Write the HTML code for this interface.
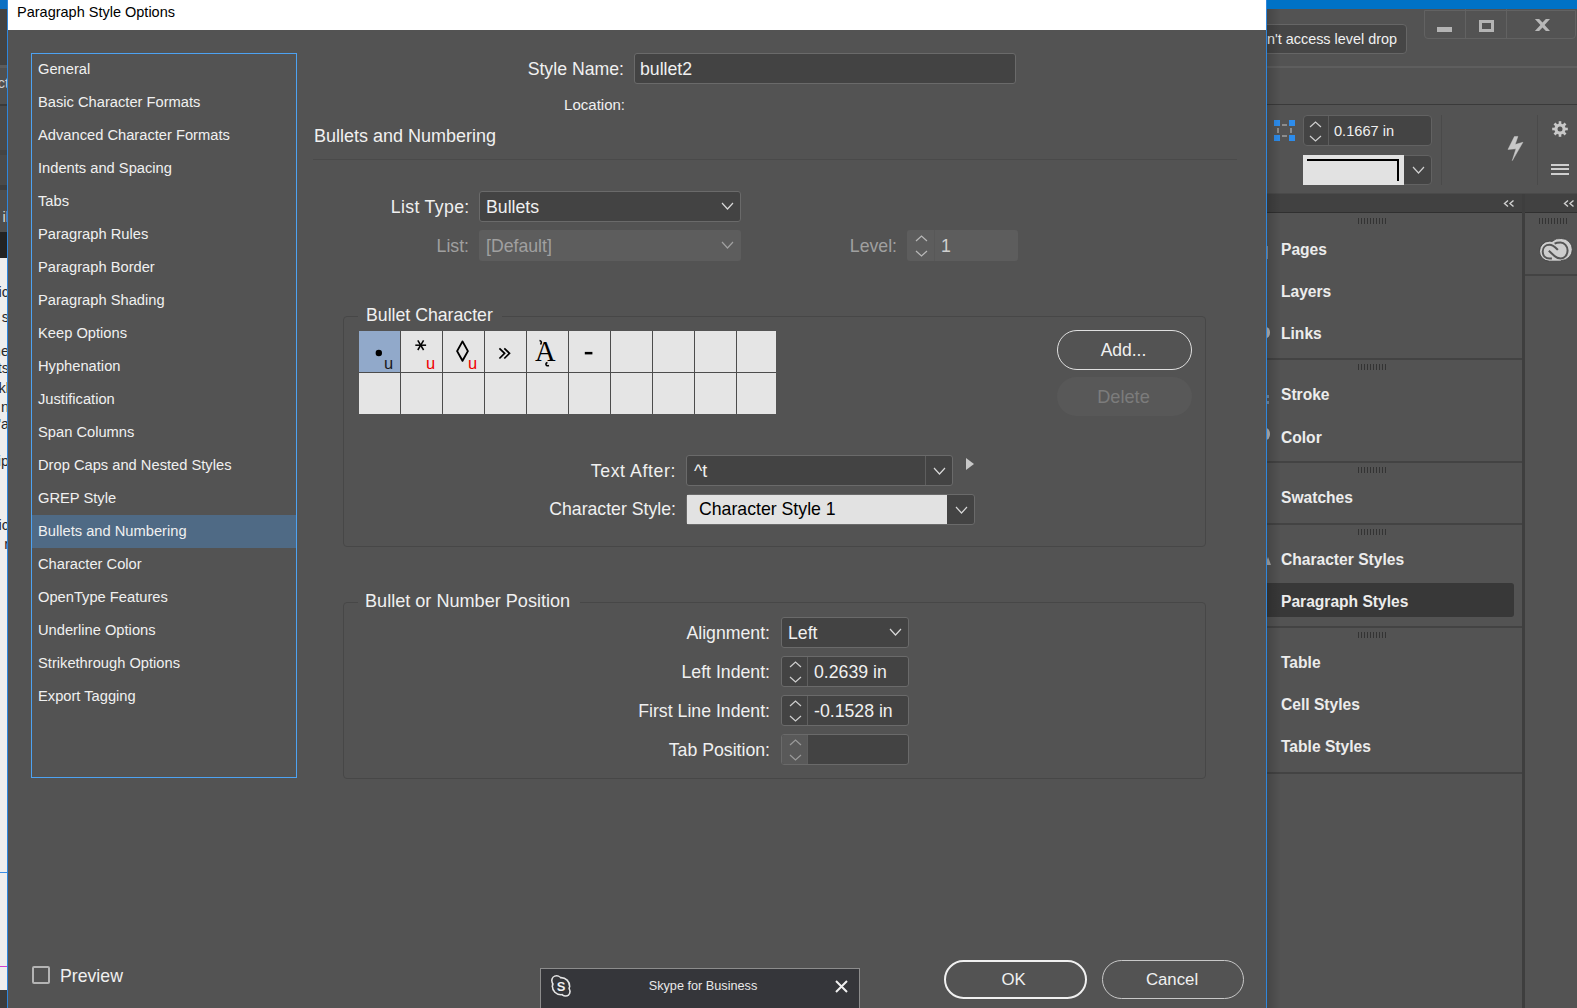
<!DOCTYPE html>
<html><head><meta charset="utf-8">
<style>
*{margin:0;padding:0;box-sizing:border-box}
html,body{width:1577px;height:1008px;overflow:hidden;background:#535353;font-family:"Liberation Sans",sans-serif}
.a{position:absolute}
.t{position:absolute;white-space:nowrap;line-height:1;color:#f0f0f0}
svg.a{overflow:visible}
</style></head><body>

<div class="a" style="left:0px;top:0px;width:7px;height:9px;background:#0c6fc2"></div>
<div class="a" style="left:0px;top:9px;width:7px;height:56px;background:#434343"></div>
<div class="a" style="left:0px;top:65px;width:7px;height:3px;background:#5c5c5c"></div>
<div class="a" style="left:0px;top:68px;width:7px;height:36px;background:#505050"></div>
<div class="a" style="left:0px;top:104px;width:7px;height:2px;background:#3a3a3a"></div>
<div class="a" style="left:0px;top:106px;width:7px;height:44px;background:#4a4a4a"></div>
<div class="a" style="left:0px;top:150px;width:7px;height:5px;background:#444"></div>
<div class="a" style="left:0px;top:155px;width:7px;height:30px;background:#4a4a4a"></div>
<div class="a" style="left:0px;top:185px;width:7px;height:5px;background:#3e3e3e"></div>
<div class="a" style="left:0px;top:190px;width:7px;height:42px;background:#4e4e4e"></div>
<div class="a" style="left:0px;top:232px;width:7px;height:26px;background:#232323"></div>
<div class="a" style="left:0px;top:258px;width:7px;height:732px;background:#eeeeee"></div>
<div class="a" style="left:0px;top:872px;width:7px;height:1px;background:#3a8ee6"></div>
<div class="a" style="left:0px;top:966px;width:7px;height:1px;background:#d040d0"></div>
<div class="a" style="left:0px;top:990px;width:7px;height:18px;background:#3c3c3c"></div>
<div class="a" style="left:1267px;top:0px;width:310px;height:9px;background:#0072c6"></div>
<div class="a" style="left:1267px;top:9px;width:310px;height:96px;background:#535353"></div>
<div class="a" style="left:1250px;top:24px;width:157px;height:30px;background:#464646;border:1px solid #666666;border-radius:4px"></div>
<div class="t" style="left:1267px;top:32px;font-size:14.4px;color:#f0f0f0">n't access level drop</div>
<div class="a" style="left:1424px;top:10px;width:152px;height:29px;border:1px solid #626262;border-radius:0 0 4px 4px"></div>
<div class="a" style="left:1465px;top:9px;width:1px;height:29px;background:#626262"></div>
<div class="a" style="left:1506px;top:9px;width:1px;height:29px;background:#626262"></div>
<div class="a" style="left:1437px;top:27px;width:15px;height:5px;background:#b4b4b4"></div>
<div class="a" style="left:1479px;top:20px;width:15px;height:12px;border:3px solid #b4b4b4"></div>
<svg class="a" style="left:1500px;top:10px" width="60" height="30"><polygon points="34.9,9 39.1,9 42.5,12.6 45.9,9 50,9 44.6,15 50,21 45.9,21 42.5,17.4 39.1,21 34.9,21 40.4,15" fill="#b8b8b8"/></svg>
<div class="a" style="left:1267px;top:66px;width:310px;height:2px;background:#5e5e5e"></div>
<div class="a" style="left:1267px;top:104px;width:310px;height:1px;background:#3a3a3a"></div>
<svg class="a" style="left:1274px;top:120px" width="22" height="22"><rect x="0" y="0" width="6" height="6" fill="#2d8ceb"/><rect x="15" y="0" width="6" height="6" fill="#2d8ceb"/><rect x="0" y="15" width="6" height="6" fill="#2d8ceb"/><rect x="15" y="15" width="6" height="6" fill="#2d8ceb"/><rect x="8" y="4" width="5" height="2" fill="#8c8c8c"/><rect x="8" y="15" width="5" height="2" fill="#8c8c8c"/><rect x="3" y="8" width="2" height="5" fill="#8c8c8c"/><rect x="16" y="8" width="2" height="5" fill="#8c8c8c"/></svg>
<div class="a" style="left:1303px;top:115px;width:129px;height:31px;background:#444;border:1px solid #626262;border-radius:4px"></div>
<div class="a" style="left:1328px;top:116px;width:1px;height:29px;background:#5c5c5c"></div>
<svg class="a" style="left:1308.5px;top:120.5px" width="13" height="7"><polyline points="1,6 6.5,1 12,6" fill="none" stroke="#cfcfcf" stroke-width="1.2"/></svg>
<svg class="a" style="left:1308.5px;top:134.5px" width="13" height="7"><polyline points="1,1 6.5,6 12,1" fill="none" stroke="#cfcfcf" stroke-width="1.2"/></svg>
<div class="t" style="left:1334px;top:124px;font-size:14.6px;">0.1667 in</div>
<div class="a" style="left:1303px;top:155px;width:129px;height:30px;background:#444;border:1px solid #626262;border-radius:4px"></div>
<div class="a" style="left:1303px;top:155px;width:101px;height:30px;background:#e2e2e2"></div>
<div class="a" style="left:1307px;top:159px;width:92px;height:2px;background:#000"></div>
<div class="a" style="left:1397px;top:159px;width:2px;height:22px;background:#000"></div>
<svg class="a" style="left:1411.5px;top:166.0px" width="13" height="8"><polyline points="1,1 6.5,7 12,1" fill="none" stroke="#cfcfcf" stroke-width="1.2"/></svg>
<div class="a" style="left:1441px;top:115px;width:1px;height:70px;background:#4a4a4a"></div>
<div class="a" style="left:1537px;top:115px;width:1px;height:70px;background:#4a4a4a"></div>
<svg class="a" style="left:1506px;top:135px" width="19" height="27"><polygon points="8.4,1.6 11.9,1.4 9.1,9.6 16.9,7.3 6.3,25.6 10,13.75 2,14.4" fill="#c8c8c8" stroke="#c8c8c8" stroke-width="0.5" stroke-linejoin="round"/></svg>
<svg class="a" style="left:1551px;top:120px" width="18" height="18"><g transform="translate(9,9)" fill="#c8c8c8"><circle r="5.6"/><rect x="-1.3" y="-7.8" width="2.6" height="3.5" transform="rotate(0)"/><rect x="-1.3" y="-7.8" width="2.6" height="3.5" transform="rotate(45)"/><rect x="-1.3" y="-7.8" width="2.6" height="3.5" transform="rotate(90)"/><rect x="-1.3" y="-7.8" width="2.6" height="3.5" transform="rotate(135)"/><rect x="-1.3" y="-7.8" width="2.6" height="3.5" transform="rotate(180)"/><rect x="-1.3" y="-7.8" width="2.6" height="3.5" transform="rotate(225)"/><rect x="-1.3" y="-7.8" width="2.6" height="3.5" transform="rotate(270)"/><rect x="-1.3" y="-7.8" width="2.6" height="3.5" transform="rotate(315)"/><circle r="2.5" fill="#535353"/></g></svg>
<div class="a" style="left:1551px;top:164px;width:18px;height:2px;background:#cfcfcf"></div>
<div class="a" style="left:1551px;top:168px;width:18px;height:2px;background:#cfcfcf"></div>
<div class="a" style="left:1551px;top:173px;width:18px;height:2px;background:#cfcfcf"></div>
<div class="a" style="left:1267px;top:193px;width:310px;height:1px;background:#4a4a4a"></div>
<div class="a" style="left:1267px;top:194px;width:310px;height:18px;background:#414141"></div>
<div class="a" style="left:1267px;top:212px;width:310px;height:1px;background:#303030"></div>
<svg class="a" style="left:1503px;top:200px" width="12" height="8"><polyline points="5,0.5 1.5,3.5 5,6.5" fill="none" stroke="#d0d0d0" stroke-width="1.4"/><polyline points="10.5,0.5 7,3.5 10.5,6.5" fill="none" stroke="#d0d0d0" stroke-width="1.4"/></svg>
<svg class="a" style="left:1563px;top:200px" width="12" height="8"><polyline points="5,0.5 1.5,3.5 5,6.5" fill="none" stroke="#d0d0d0" stroke-width="1.4"/><polyline points="10.5,0.5 7,3.5 10.5,6.5" fill="none" stroke="#d0d0d0" stroke-width="1.4"/></svg>
<div class="a" style="left:1522px;top:194px;width:3px;height:814px;background:#3e3e3e"></div>
<svg class="a" style="left:1358px;top:218px" width="30" height="6"><rect x="0" y="0" width="1" height="6" fill="#333"/><rect x="3" y="0" width="1" height="6" fill="#333"/><rect x="6" y="0" width="1" height="6" fill="#333"/><rect x="9" y="0" width="1" height="6" fill="#333"/><rect x="12" y="0" width="1" height="6" fill="#333"/><rect x="15" y="0" width="1" height="6" fill="#333"/><rect x="18" y="0" width="1" height="6" fill="#333"/><rect x="21" y="0" width="1" height="6" fill="#333"/><rect x="24" y="0" width="1" height="6" fill="#333"/><rect x="27" y="0" width="1" height="6" fill="#333"/></svg>
<svg class="a" style="left:1358px;top:364px" width="30" height="6"><rect x="0" y="0" width="1" height="6" fill="#333"/><rect x="3" y="0" width="1" height="6" fill="#333"/><rect x="6" y="0" width="1" height="6" fill="#333"/><rect x="9" y="0" width="1" height="6" fill="#333"/><rect x="12" y="0" width="1" height="6" fill="#333"/><rect x="15" y="0" width="1" height="6" fill="#333"/><rect x="18" y="0" width="1" height="6" fill="#333"/><rect x="21" y="0" width="1" height="6" fill="#333"/><rect x="24" y="0" width="1" height="6" fill="#333"/><rect x="27" y="0" width="1" height="6" fill="#333"/></svg>
<svg class="a" style="left:1358px;top:467px" width="30" height="6"><rect x="0" y="0" width="1" height="6" fill="#333"/><rect x="3" y="0" width="1" height="6" fill="#333"/><rect x="6" y="0" width="1" height="6" fill="#333"/><rect x="9" y="0" width="1" height="6" fill="#333"/><rect x="12" y="0" width="1" height="6" fill="#333"/><rect x="15" y="0" width="1" height="6" fill="#333"/><rect x="18" y="0" width="1" height="6" fill="#333"/><rect x="21" y="0" width="1" height="6" fill="#333"/><rect x="24" y="0" width="1" height="6" fill="#333"/><rect x="27" y="0" width="1" height="6" fill="#333"/></svg>
<svg class="a" style="left:1358px;top:529px" width="30" height="6"><rect x="0" y="0" width="1" height="6" fill="#333"/><rect x="3" y="0" width="1" height="6" fill="#333"/><rect x="6" y="0" width="1" height="6" fill="#333"/><rect x="9" y="0" width="1" height="6" fill="#333"/><rect x="12" y="0" width="1" height="6" fill="#333"/><rect x="15" y="0" width="1" height="6" fill="#333"/><rect x="18" y="0" width="1" height="6" fill="#333"/><rect x="21" y="0" width="1" height="6" fill="#333"/><rect x="24" y="0" width="1" height="6" fill="#333"/><rect x="27" y="0" width="1" height="6" fill="#333"/></svg>
<svg class="a" style="left:1358px;top:632px" width="30" height="6"><rect x="0" y="0" width="1" height="6" fill="#333"/><rect x="3" y="0" width="1" height="6" fill="#333"/><rect x="6" y="0" width="1" height="6" fill="#333"/><rect x="9" y="0" width="1" height="6" fill="#333"/><rect x="12" y="0" width="1" height="6" fill="#333"/><rect x="15" y="0" width="1" height="6" fill="#333"/><rect x="18" y="0" width="1" height="6" fill="#333"/><rect x="21" y="0" width="1" height="6" fill="#333"/><rect x="24" y="0" width="1" height="6" fill="#333"/><rect x="27" y="0" width="1" height="6" fill="#333"/></svg>
<svg class="a" style="left:1539px;top:218px" width="30" height="6"><rect x="0" y="0" width="1" height="6" fill="#333"/><rect x="3" y="0" width="1" height="6" fill="#333"/><rect x="6" y="0" width="1" height="6" fill="#333"/><rect x="9" y="0" width="1" height="6" fill="#333"/><rect x="12" y="0" width="1" height="6" fill="#333"/><rect x="15" y="0" width="1" height="6" fill="#333"/><rect x="18" y="0" width="1" height="6" fill="#333"/><rect x="21" y="0" width="1" height="6" fill="#333"/><rect x="24" y="0" width="1" height="6" fill="#333"/><rect x="27" y="0" width="1" height="6" fill="#333"/></svg>
<div class="a" style="left:1267px;top:358px;width:255px;height:2px;background:#434343"></div>
<div class="a" style="left:1267px;top:461px;width:255px;height:2px;background:#434343"></div>
<div class="a" style="left:1267px;top:523px;width:255px;height:2px;background:#434343"></div>
<div class="a" style="left:1267px;top:626px;width:255px;height:2px;background:#434343"></div>
<div class="a" style="left:1267px;top:772px;width:255px;height:2px;background:#434343"></div>
<div class="a" style="left:1525px;top:274px;width:52px;height:2px;background:#434343"></div>
<div class="a" style="left:1267px;top:583px;width:247px;height:34px;background:#383838;border-radius:0 3px 3px 0"></div>
<div class="t" style="left:1281px;top:242px;font-size:15.6px;font-weight:bold;color:#ececec">Pages</div>
<div class="t" style="left:1281px;top:284px;font-size:15.6px;font-weight:bold;color:#ececec">Layers</div>
<div class="t" style="left:1281px;top:326px;font-size:15.6px;font-weight:bold;color:#ececec">Links</div>
<div class="t" style="left:1281px;top:387px;font-size:15.6px;font-weight:bold;color:#ececec">Stroke</div>
<div class="t" style="left:1281px;top:430px;font-size:15.6px;font-weight:bold;color:#ececec">Color</div>
<div class="t" style="left:1281px;top:490px;font-size:15.6px;font-weight:bold;color:#ececec">Swatches</div>
<div class="t" style="left:1281px;top:552px;font-size:15.6px;font-weight:bold;color:#ececec">Character Styles</div>
<div class="t" style="left:1281px;top:594px;font-size:15.6px;font-weight:bold;color:#ececec">Paragraph Styles</div>
<div class="t" style="left:1281px;top:655px;font-size:15.6px;font-weight:bold;color:#ececec">Table</div>
<div class="t" style="left:1281px;top:697px;font-size:15.6px;font-weight:bold;color:#ececec">Cell Styles</div>
<div class="t" style="left:1281px;top:739px;font-size:15.6px;font-weight:bold;color:#ececec">Table Styles</div>
<div class="a" style="left:1267px;top:246px;width:1px;height:13px;background:#8a8a8a"></div>
<div class="a" style="left:1262px;top:327px;width:8px;height:11px;background:#b8b8b8;border-radius:50%"></div>
<div class="a" style="left:1262px;top:428px;width:8px;height:12px;background:#b8b8b8;border-radius:50%"></div>
<div class="a" style="left:1267px;top:395px;width:2px;height:3px;background:#7a8a9a"></div>
<div class="a" style="left:1267px;top:401px;width:2px;height:3px;background:#7a8a9a"></div>
<svg class="a" style="left:1265px;top:557px" width="6" height="9"><polygon points="0,8 3,0 6,8" fill="#a8a8a8"/></svg>
<svg class="a" style="left:1539px;top:236px" width="34" height="27"><path d="M10.5,25.2 A10,10 0 0,1 10.5,5.2 A10,10 0 0,1 13,5.5 A11,11 0 0,1 22.3,2.5 A11,11 0 0,1 22.3,24.5 L22.3,25.2 Z" fill="#cdcdcd" stroke="#3a3a3a" stroke-width="0.8"/><path d="M18.9,13.9 C16,11 14,8.8 10.5,8.8 C6.5,8.8 3.7,11.7 3.7,15.6 C3.7,19.5 6.5,22.4 10.5,22.4 L12.9,22.4" fill="none" stroke="#555" stroke-width="2"/><path d="M9.8,14.7 L15.5,20 C17,21.5 19,22.4 21.8,22.4 C25.6,22.4 28.6,19 28.6,14.5 C28.6,10 25.2,6.6 21.6,6.6 C19,6.6 17,6.8 15.6,7.6" fill="none" stroke="#555" stroke-width="2"/></svg>
<div class="a" style="left:0;top:0;width:7px;height:1008px;overflow:hidden">
<div class="t" style="right:-2px;top:76px;font-size:14.5px;color:#cfcfcf">ct</div>
<div class="t" style="right:-2px;top:210px;font-size:14.5px;color:#d8d8d8">il</div>
<div class="t" style="right:-2px;top:285px;font-size:14.5px;color:#2a2a2a">ic</div>
<div class="t" style="right:-2px;top:310px;font-size:14.5px;color:#2a2a2a">s</div>
<div class="t" style="right:-2px;top:344px;font-size:14.5px;color:#2a2a2a">ne</div>
<div class="t" style="right:-2px;top:361px;font-size:14.5px;color:#2a2a2a">ts</div>
<div class="t" style="right:-2px;top:381px;font-size:14.5px;color:#2a2a2a">kl</div>
<div class="t" style="right:-2px;top:400px;font-size:14.5px;color:#2a2a2a">n</div>
<div class="t" style="right:-2px;top:417px;font-size:14.5px;color:#2a2a2a">'a</div>
<div class="t" style="right:-2px;top:454px;font-size:14.5px;color:#2a2a2a">ip</div>
<div class="t" style="right:-2px;top:518px;font-size:14.5px;color:#2a2a2a">ic</div>
<div class="t" style="right:-2px;top:537px;font-size:14.5px;color:#2a2a2a">r</div>
</div>
<div class="a" style="left:1267px;top:9px;width:14px;height:999px;background:linear-gradient(to right,rgba(0,0,0,0.16),rgba(0,0,0,0))"></div>
<div class="a" style="left:7px;top:0px;width:1px;height:1008px;background:#2f86dc"></div>
<div class="a" style="left:1266px;top:0px;width:1px;height:1008px;background:#2f86dc"></div>
<div class="a" style="left:8px;top:30px;width:1258px;height:978px;background:#535353"></div>
<div class="a" style="left:8px;top:0px;width:1258px;height:30px;background:#fff"></div>
<div class="t" style="left:17px;top:5px;font-size:14.5px;color:#000">Paragraph Style Options</div>
<div class="a" style="left:31px;top:53px;width:266px;height:725px;border:1px solid #4da2f2"></div>
<div class="a" style="left:32px;top:515px;width:264px;height:33px;background:#4f6a85"></div>
<div class="t" style="left:38px;top:62px;font-size:14.7px;">General</div>
<div class="t" style="left:38px;top:95px;font-size:14.7px;">Basic Character Formats</div>
<div class="t" style="left:38px;top:128px;font-size:14.7px;">Advanced Character Formats</div>
<div class="t" style="left:38px;top:161px;font-size:14.7px;">Indents and Spacing</div>
<div class="t" style="left:38px;top:194px;font-size:14.7px;">Tabs</div>
<div class="t" style="left:38px;top:227px;font-size:14.7px;">Paragraph Rules</div>
<div class="t" style="left:38px;top:260px;font-size:14.7px;">Paragraph Border</div>
<div class="t" style="left:38px;top:293px;font-size:14.7px;">Paragraph Shading</div>
<div class="t" style="left:38px;top:326px;font-size:14.7px;">Keep Options</div>
<div class="t" style="left:38px;top:359px;font-size:14.7px;">Hyphenation</div>
<div class="t" style="left:38px;top:392px;font-size:14.7px;">Justification</div>
<div class="t" style="left:38px;top:425px;font-size:14.7px;">Span Columns</div>
<div class="t" style="left:38px;top:458px;font-size:14.7px;">Drop Caps and Nested Styles</div>
<div class="t" style="left:38px;top:491px;font-size:14.7px;">GREP Style</div>
<div class="t" style="left:38px;top:524px;font-size:14.7px;">Bullets and Numbering</div>
<div class="t" style="left:38px;top:557px;font-size:14.7px;">Character Color</div>
<div class="t" style="left:38px;top:590px;font-size:14.7px;">OpenType Features</div>
<div class="t" style="left:38px;top:623px;font-size:14.7px;">Underline Options</div>
<div class="t" style="left:38px;top:656px;font-size:14.7px;">Strikethrough Options</div>
<div class="t" style="left:38px;top:689px;font-size:14.7px;">Export Tagging</div>
<div class="t" style="right:953px;top:61px;font-size:17.7px;">Style Name:</div>
<div class="a" style="left:634px;top:53px;width:382px;height:31px;background:#434343;border:1px solid #6a6a6a;border-radius:3px"></div>
<div class="t" style="left:640px;top:61px;font-size:17.7px;">bullet2</div>
<div class="t" style="right:952px;top:97px;font-size:15px;">Location:</div>
<div class="t" style="left:314px;top:127px;font-size:18px;">Bullets and Numbering</div>
<div class="a" style="left:313px;top:159px;width:924px;height:1px;background:#4a4a4a"></div>
<div class="t" style="right:1107.4px;top:199px;font-size:17.7px;letter-spacing:0.35px">List Type:</div>
<div class="a" style="left:479px;top:191px;width:262px;height:31px;background:#434343;border:1px solid #6a6a6a;border-radius:3px"></div>
<div class="t" style="left:486px;top:199px;font-size:17.7px;">Bullets</div>
<svg class="a" style="left:720.5px;top:202.0px" width="13" height="8"><polyline points="1,1 6.5,7 12,1" fill="none" stroke="#d8d8d8" stroke-width="1.2"/></svg>
<div class="t" style="right:1108px;top:238px;font-size:17.7px;color:#a0a0a0">List:</div>
<div class="a" style="left:479px;top:230px;width:262px;height:31px;background:#5d5d5d;border-radius:3px"></div>
<div class="t" style="left:486px;top:238px;font-size:17.7px;color:#a0a0a0">[Default]</div>
<svg class="a" style="left:720.5px;top:241.0px" width="13" height="8"><polyline points="1,1 6.5,7 12,1" fill="none" stroke="#a0a0a0" stroke-width="1.2"/></svg>
<div class="t" style="right:680px;top:238px;font-size:17.7px;color:#a0a0a0">Level:</div>
<div class="a" style="left:907px;top:230px;width:111px;height:31px;background:#5d5d5d;border-radius:3px"></div>
<div class="a" style="left:934px;top:230px;width:1px;height:31px;background:#585858"></div>
<svg class="a" style="left:914.5px;top:234.5px" width="13" height="7"><polyline points="1,6 6.5,1 12,6" fill="none" stroke="#b8b8b8" stroke-width="1.2"/></svg>
<svg class="a" style="left:914.5px;top:249.5px" width="13" height="7"><polyline points="1,1 6.5,6 12,1" fill="none" stroke="#b8b8b8" stroke-width="1.2"/></svg>
<div class="t" style="left:941px;top:238px;font-size:17.7px;color:#d0d0d0">1</div>
<div class="a" style="left:343px;top:316px;width:863px;height:231px;border:1px solid #474747;border-radius:4px"></div>
<div class="a" style="left:358px;top:310px;width:144px;height:12px;background:#535353"></div>
<div class="t" style="left:366px;top:307px;font-size:17.7px;">Bullet Character</div>
<div class="a" style="left:359px;top:331px;width:417px;height:82px;background:#4c4c4c"></div>
<div class="a" style="left:359px;top:331px;width:41px;height:41px;background:#91a9ca"></div>
<div class="a" style="left:401px;top:331px;width:41px;height:41px;background:#e5e5e5"></div>
<div class="a" style="left:443px;top:331px;width:41px;height:41px;background:#e5e5e5"></div>
<div class="a" style="left:485px;top:331px;width:41px;height:41px;background:#e5e5e5"></div>
<div class="a" style="left:527px;top:331px;width:41px;height:41px;background:#e5e5e5"></div>
<div class="a" style="left:569px;top:331px;width:41px;height:41px;background:#e5e5e5"></div>
<div class="a" style="left:611px;top:331px;width:41px;height:41px;background:#e5e5e5"></div>
<div class="a" style="left:653px;top:331px;width:41px;height:41px;background:#e5e5e5"></div>
<div class="a" style="left:695px;top:331px;width:41px;height:41px;background:#e5e5e5"></div>
<div class="a" style="left:737px;top:331px;width:39px;height:41px;background:#e5e5e5"></div>
<div class="a" style="left:359px;top:373px;width:41px;height:41px;background:#e5e5e5"></div>
<div class="a" style="left:401px;top:373px;width:41px;height:41px;background:#e5e5e5"></div>
<div class="a" style="left:443px;top:373px;width:41px;height:41px;background:#e5e5e5"></div>
<div class="a" style="left:485px;top:373px;width:41px;height:41px;background:#e5e5e5"></div>
<div class="a" style="left:527px;top:373px;width:41px;height:41px;background:#e5e5e5"></div>
<div class="a" style="left:569px;top:373px;width:41px;height:41px;background:#e5e5e5"></div>
<div class="a" style="left:611px;top:373px;width:41px;height:41px;background:#e5e5e5"></div>
<div class="a" style="left:653px;top:373px;width:41px;height:41px;background:#e5e5e5"></div>
<div class="a" style="left:695px;top:373px;width:41px;height:41px;background:#e5e5e5"></div>
<div class="a" style="left:737px;top:373px;width:39px;height:41px;background:#e5e5e5"></div>
<svg class="a" style="left:359px;top:331px" width="240" height="42"><circle cx="19.8" cy="22" r="3.2" fill="#000"/><g stroke="#000" stroke-width="1.5" stroke-linecap="butt"><line x1="56.3" y1="14.2" x2="67.1" y2="14.2"/><line x1="58.8" y1="9.4" x2="64.6" y2="19"/><line x1="64.6" y1="9.4" x2="58.8" y2="19"/></g><polygon points="103.5,10.4 98.1,20.1 103.5,29.8 108.9,20.1" fill="none" stroke="#000" stroke-width="1.9" stroke-linejoin="round"/><polyline points="140.4,17.4 145.6,22.3 140.4,27.5" fill="none" stroke="#000" stroke-width="1.7"/><polyline points="145.3,17.4 150.5,22.3 145.3,27.5" fill="none" stroke="#000" stroke-width="1.7"/><path d="M180.5,9.5 C182.5,10 183,11.5 181.5,13.5" fill="none" stroke="#000" stroke-width="1.6"/><path d="M188.5,31.5 C186,32.5 186.5,35.5 190,34.5" fill="none" stroke="#000" stroke-width="1.5"/><rect x="225.8" y="20.9" width="7.6" height="2.5" fill="#000"/></svg>
<div class="t" style="left:384px;top:355px;font-size:16.5px;color:#1a1a1a">u</div>
<div class="t" style="left:426px;top:355px;font-size:16.5px;color:#f00000">u</div>
<div class="t" style="left:468px;top:355px;font-size:16.5px;color:#f00000">u</div>
<div class="t" style="left:535px;top:338px;font-size:28.5px;font-family:'Liberation Serif';color:#000;line-height:28px">A</div>
<div class="a" style="left:1057px;top:330px;width:135px;height:40px;border:1px solid #e0e0e0;border-radius:20px"></div>
<div class="t" style="left:1056px;top:342px;font-size:17.5px;width:135px;text-align:center;">Add...</div>
<div class="a" style="left:1057px;top:377px;width:135px;height:39px;background:#585858;border-radius:20px"></div>
<div class="t" style="left:1056px;top:388px;font-size:18.2px;width:135px;text-align:center;color:#7c7c7c">Delete</div>
<div class="t" style="right:901px;top:463px;font-size:17.7px;letter-spacing:0.6px">Text After:</div>
<div class="a" style="left:686px;top:455px;width:267px;height:31px;background:#434343;border:1px solid #6a6a6a;border-radius:3px"></div>
<div class="a" style="left:925px;top:456px;width:1px;height:29px;background:#5e5e5e"></div>
<div class="t" style="left:694px;top:463px;font-size:17.7px;">^t</div>
<svg class="a" style="left:932.5px;top:467.0px" width="13" height="8"><polyline points="1,1 6.5,7 12,1" fill="none" stroke="#d8d8d8" stroke-width="1.2"/></svg>
<svg class="a" style="left:966px;top:458px" width="8" height="12"><polygon points="0,0 8,6 0,12" fill="#c8c8c8"/></svg>
<div class="t" style="right:901px;top:501px;font-size:17.7px;">Character Style:</div>
<div class="a" style="left:686px;top:494px;width:289px;height:31px;background:#434343;border:1px solid #6a6a6a;border-radius:3px"></div>
<div class="a" style="left:687px;top:495px;width:260px;height:29px;background:#e2e2e2"></div>
<div class="t" style="left:699px;top:501px;font-size:17.7px;color:#000">Character Style 1</div>
<svg class="a" style="left:954.5px;top:506.0px" width="13" height="8"><polyline points="1,1 6.5,7 12,1" fill="none" stroke="#d8d8d8" stroke-width="1.2"/></svg>
<div class="a" style="left:343px;top:602px;width:863px;height:177px;border:1px solid #474747;border-radius:4px"></div>
<div class="a" style="left:358px;top:595px;width:222px;height:12px;background:#535353"></div>
<div class="t" style="left:365px;top:592px;font-size:18.1px;">Bullet or Number Position</div>
<div class="t" style="right:807px;top:625px;font-size:17.7px;">Alignment:</div>
<div class="a" style="left:781px;top:617px;width:128px;height:31px;background:#434343;border:1px solid #6a6a6a;border-radius:3px"></div>
<div class="t" style="left:788px;top:625px;font-size:17.7px;">Left</div>
<svg class="a" style="left:888.5px;top:628.0px" width="13" height="8"><polyline points="1,1 6.5,7 12,1" fill="none" stroke="#d8d8d8" stroke-width="1.2"/></svg>
<div class="t" style="right:807px;top:664px;font-size:17.7px;">Left Indent:</div>
<div class="a" style="left:781px;top:656px;width:128px;height:31px;background:#434343;border:1px solid #6a6a6a;border-radius:3px"></div>
<div class="a" style="left:807px;top:657px;width:1px;height:29px;background:#5e5e5e"></div>
<svg class="a" style="left:788.5px;top:660.5px" width="13" height="7"><polyline points="1,6 6.5,1 12,6" fill="none" stroke="#cfcfcf" stroke-width="1.2"/></svg>
<svg class="a" style="left:788.5px;top:675.5px" width="13" height="7"><polyline points="1,1 6.5,6 12,1" fill="none" stroke="#cfcfcf" stroke-width="1.2"/></svg>
<div class="t" style="left:814px;top:664px;font-size:17.7px;">0.2639 in</div>
<div class="t" style="right:807px;top:703px;font-size:17.7px;">First Line Indent:</div>
<div class="a" style="left:781px;top:695px;width:128px;height:31px;background:#434343;border:1px solid #6a6a6a;border-radius:3px"></div>
<div class="a" style="left:807px;top:696px;width:1px;height:29px;background:#5e5e5e"></div>
<svg class="a" style="left:788.5px;top:699.5px" width="13" height="7"><polyline points="1,6 6.5,1 12,6" fill="none" stroke="#cfcfcf" stroke-width="1.2"/></svg>
<svg class="a" style="left:788.5px;top:714.5px" width="13" height="7"><polyline points="1,1 6.5,6 12,1" fill="none" stroke="#cfcfcf" stroke-width="1.2"/></svg>
<div class="t" style="left:814px;top:703px;font-size:17.7px;">-0.1528 in</div>
<div class="t" style="right:807px;top:742px;font-size:17.7px;">Tab Position:</div>
<div class="a" style="left:781px;top:734px;width:128px;height:31px;background:#434343;border:1px solid #6a6a6a;border-radius:3px"></div>
<div class="a" style="left:807px;top:735px;width:1px;height:29px;background:#5e5e5e"></div>
<div class="a" style="left:782px;top:735px;width:25px;height:29px;background:#595959;border-radius:2px 0 0 2px"></div>
<svg class="a" style="left:788.5px;top:738.5px" width="13" height="7"><polyline points="1,6 6.5,1 12,6" fill="none" stroke="#9a9a9a" stroke-width="1.2"/></svg>
<svg class="a" style="left:788.5px;top:753.5px" width="13" height="7"><polyline points="1,1 6.5,6 12,1" fill="none" stroke="#9a9a9a" stroke-width="1.2"/></svg>
<div class="a" style="left:32px;top:966px;width:18px;height:18px;border:2px solid #b4b4b4;border-radius:2px"></div>
<div class="t" style="left:60px;top:968px;font-size:17.7px;">Preview</div>
<div class="a" style="left:944px;top:960px;width:143px;height:39px;border:2px solid #f0f0f0;border-radius:20px"></div>
<div class="t" style="left:942px;top:972px;font-size:16.8px;width:143px;text-align:center;">OK</div>
<div class="a" style="left:1102px;top:960px;width:142px;height:39px;border:1px solid #c8c8c8;border-radius:20px"></div>
<div class="t" style="left:1101px;top:972px;font-size:16.8px;width:142px;text-align:center;">Cancel</div>
<div class="a" style="left:540px;top:968px;width:320px;height:40px;background:#35363a;border:1px solid #8c8c8c;border-bottom:none"></div>
<div class="t" style="left:543px;top:980px;font-size:12.7px;width:320px;text-align:center;color:#e8e8e8">Skype for Business</div>
<svg class="a" style="left:546px;top:970px" width="32" height="30"><circle cx="15.0" cy="16.2" r="9.4" fill="#e6e6e6"/><circle cx="10.6" cy="10.6" r="5.6" fill="#e6e6e6"/><circle cx="19.6" cy="21.6" r="5.2" fill="#e6e6e6"/><circle cx="15.0" cy="16.2" r="7.8" fill="#35363a"/><circle cx="10.6" cy="10.6" r="4.0" fill="#35363a"/><circle cx="19.6" cy="21.6" r="3.6000000000000005" fill="#35363a"/><text x="15" y="20.8" text-anchor="middle" font-family="Liberation Sans" font-weight="bold" font-size="13" fill="#f0f0f0">S</text></svg>
<svg class="a" style="left:835px;top:980px" width="13" height="13"><path d="M1,1 L12,12 M12,1 L1,12" stroke="#f0f0f0" stroke-width="2"/></svg>
</body></html>
